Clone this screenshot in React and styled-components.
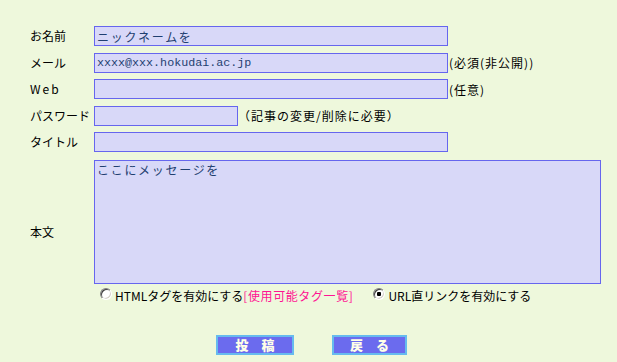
import React from "react";
import styled, { createGlobalStyle } from "styled-components";

const Global = createGlobalStyle`
  html, body { margin: 0; padding: 0; background: #eef8dc; }
  body { font-family: "Noto Sans CJK JP", "Noto Sans", sans-serif; font-size: 12px; color: #000; }
`;

const Page = styled.form`
  width: 617px;
  height: 362px;
  box-sizing: border-box;
  padding: 26px 0 0 30px;
  background: #eef8dc;
`;

const Grid = styled.div`
  display: grid;
  grid-template-columns: 64px auto;
  row-gap: 6.5px;
  align-items: center;
`;

const Label = styled.div`
  font-size: 12px;
  line-height: 16px;
  white-space: nowrap;
  letter-spacing: ${(p) => (p.$latin ? "2px" : "0")};
`;

const Cell = styled.div`
  display: flex;
  align-items: center;
`;

const BodyCell = styled.div`
  display: flex;
  flex-direction: column;
  margin-top: 1.5px;
`;

const Field = styled.input`
  box-sizing: border-box;
  width: ${(p) => p.$w}px;
  height: 20px;
  margin: 0;
  padding: 0 2px;
  border: 1px solid #6666ee;
  background: #d8d8f8;
  color: #1f3f70;
  font-family: ${(p) => (p.$mono ? '"Liberation Mono", monospace' : '"Noto Sans CJK JP", sans-serif')};
  font-size: ${(p) => (p.$mono ? "11.7px" : "12px")};
  letter-spacing: ${(p) => (p.$mono ? "0" : "1.7px")};
  outline: none;
`;

const Area = styled.textarea`
  box-sizing: border-box;
  width: 507px;
  height: 124px;
  margin: 0;
  padding: 1px 2px;
  border: 1px solid #6666ee;
  background: #d8d8f8;
  color: #1f3f70;
  font-family: "Noto Sans CJK JP", sans-serif;
  font-size: 12px;
  line-height: 15px;
  letter-spacing: 1.7px;
  resize: none;
  overflow: hidden;
  outline: none;
  display: block;
`;

const Note = styled.span`
  font-size: 12px;
  white-space: nowrap;
  letter-spacing: 1px;
  margin-left: ${(p) => p.$ml || 0}px;
`;

const Options = styled.div`
  display: flex;
  align-items: center;
  height: 20px;
  padding-left: 6px;
  padding-top: 1px;
`;

const Option = styled.label`
  display: flex;
  align-items: center;
  gap: 3px;
  margin-right: ${(p) => p.$mr || 0}px;
  font-size: 12px;
  white-space: nowrap;
`;

const Radio = styled.input.attrs({ type: "radio" })`
  appearance: none;
  -webkit-appearance: none;
  box-sizing: border-box;
  width: 12px;
  height: 12px;
  margin: 0;
  border-radius: 50%;
  border: 1px solid;
  border-color: #808080 #ffffff #ffffff #808080;
  box-shadow: inset 1px 1px 0 #404040, inset -1px -1px 0 #d4d0c8;
  background: #fff;
  position: relative;
  top: -1px;
  &:checked {
    background: radial-gradient(circle at center, #000 0 2px, #fff 2.5px);
  }
`;

const TagLink = styled.a`
  color: #ff1493;
  text-decoration: none;
  letter-spacing: 0.6px;
`;

const Buttons = styled.div`
  display: flex;
  gap: 38px;
  margin: 30px 0 0 186px;
`;

const Button = styled.button`
  box-sizing: border-box;
  width: ${(p) => p.$w}px;
  height: 20px;
  margin: 0;
  padding: 0;
  border: 2px solid #66bbee;
  background: #6b6bee;
  color: #ffffe8;
  font-family: "Noto Sans CJK JP", sans-serif;
  font-weight: 900;
  font-size: 13px;
  line-height: 16px;
  cursor: pointer;
`;

export default function App() {
  return (
    <>
      <Global />
      <Page onSubmit={(e) => e.preventDefault()}>
        <Grid>
          <Label>お名前</Label>
          <Cell>
            <Field $w={354} defaultValue="ニックネームを" />
          </Cell>

          <Label>メール</Label>
          <Cell>
            <Field $w={354} $mono defaultValue="xxxx@xxx.hokudai.ac.jp" />
            <Note $ml={1}>(必須(非公開))</Note>
          </Cell>

          <Label $latin>Web</Label>
          <Cell>
            <Field $w={354} defaultValue="" />
            <Note $ml={1}>(任意)</Note>
          </Cell>

          <Label>パスワード</Label>
          <Cell>
            <Field $w={144} type="password" defaultValue="" />
            <Note>（記事の変更/削除に必要）</Note>
          </Cell>

          <Label>タイトル</Label>
          <Cell>
            <Field $w={354} defaultValue="" />
          </Cell>

          <Label>本文</Label>
          <BodyCell>
            <Area defaultValue="ここにメッセージを" />
            <Options>
              <Option $mr={20}>
                <Radio name="html" />
                <span>
                  HTMLタグを有効にする
                  <TagLink href="#">[使用可能タグ一覧]</TagLink>
                </span>
              </Option>
              <Option>
                <Radio name="url" defaultChecked />
                <span>URL直リンクを有効にする</span>
              </Option>
            </Options>
          </BodyCell>
        </Grid>
        <Buttons>
          <Button $w={78} type="submit">投　稿</Button>
          <Button $w={75} type="button">戻　る</Button>
        </Buttons>
      </Page>
    </>
  );
}
